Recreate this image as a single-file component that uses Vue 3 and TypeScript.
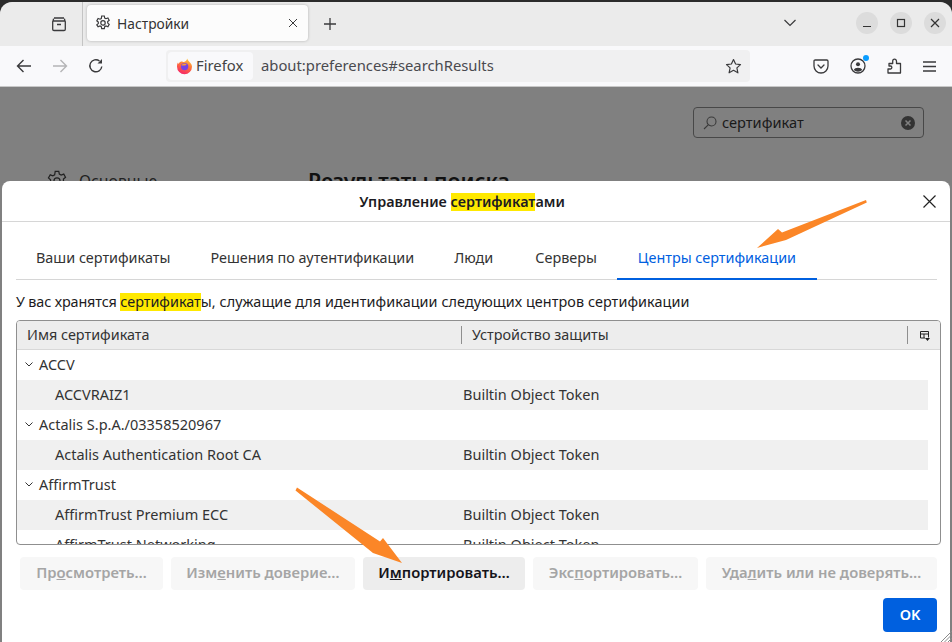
<script setup lang="ts">
interface Row { label: string; token?: string; group: boolean }
const rows: Row[] = [
  { label: 'ACCV', group: true },
  { label: 'ACCVRAIZ1', token: 'Builtin Object Token', group: false },
  { label: 'Actalis S.p.A./03358520967', group: true },
  { label: 'Actalis Authentication Root CA', token: 'Builtin Object Token', group: false },
  { label: 'AffirmTrust', group: true },
  { label: 'AffirmTrust Premium ECC', token: 'Builtin Object Token', group: false },
  { label: 'AffirmTrust Networking', token: 'Builtin Object Token', group: false },
]
const tabs = ['Ваши сертификаты', 'Решения по аутентификации', 'Люди', 'Серверы', 'Центры сертификации']
</script>

<template>
  <div class="screen">
    <div class="window">
      <header class="tabbar">
        <div class="tabbar-left">
          <svg class="ico" width="18" height="18" viewBox="0 0 18 18" fill="none" stroke="#3a3a3c" stroke-width="1.3"><path d="M4 3h10M2.700 6h12.600M2.700 6.200v8a1.300 1.300 0 0 0 1.300 1.300h10a1.300 1.300 0 0 0 1.300-1.300v-8M2.900 6.500 3.600 3.600M15.100 6.500l-.7-2.900M7 9.500h4"/></svg>
        </div>
        <div class="tab">
          <svg width="16" height="16" viewBox="0 0 16 16" fill="none" stroke="#3a3a3c" stroke-width="1.200"><path d="M6.700 1h2.600l.4 2 1.300.7 1.900-.7 1.300 2.300-1.500 1.300v1.500l1.500 1.300-1.300 2.300-1.900-.7-1.300.7-.4 2H6.700l-.4-2-1.300-.7-1.900.7L1.800 9.900l1.500-1.300V7.100L1.800 5.800 3.100 3.500l1.900.7 1.300-.7z"/><circle cx="8" cy="7.900" r="2.200"/></svg>
          <span class="tab-title">Настройки</span>
          <svg width="10" height="10" viewBox="0 0 10 10" stroke="#3a3a3c" stroke-width="1"><path d="M1 1l8 8M9 1 1 9"/></svg>
        </div>
        <svg class="plus" width="14" height="14" viewBox="0 0 14 14" stroke="#3a3a3c" stroke-width="1.300"><path d="M7 1v12M1 7h12"/></svg>
        <div class="spacer"></div>
        <svg class="list-all" width="14" height="8" viewBox="0 0 14 8" fill="none" stroke="#3a3a3c" stroke-width="1.200"><path d="M1.500 1 7 6.500 12.500 1"/></svg>
        <div class="winbtns">
          <span class="winbtn"><svg width="10" height="10" viewBox="0 0 10 10" stroke="#333" stroke-width="1.200"><path d="M1 8.500h8"/></svg></span>
          <span class="winbtn"><svg width="10" height="10" viewBox="0 0 10 10" fill="none" stroke="#333" stroke-width="1.200"><rect x="1.500" y="1.500" width="7" height="7"/></svg></span>
          <span class="winbtn"><svg width="10" height="10" viewBox="0 0 10 10" stroke="#333" stroke-width="1.200"><path d="M1 1l8 8M9 1 1 9"/></svg></span>
        </div>
      </header>

      <nav class="toolbar">
        <svg class="nav" width="16" height="16" viewBox="0 0 16 16" fill="none" stroke="#3a3a3c" stroke-width="1.400"><path d="M15 8H1.500M7.500 2l-6 6 6 6"/></svg>
        <svg class="nav" width="16" height="16" viewBox="0 0 16 16" fill="none" stroke="#b4b4b6" stroke-width="1.400"><path d="M1 8h13.500M8.500 2l6 6-6 6"/></svg>
        <svg class="nav" width="16" height="16" viewBox="0 0 16 16" fill="none" stroke="#3a3a3c" stroke-width="1.400"><path d="M13.800 8.500A6 6 0 1 1 11.500 3"/><path d="M14 1v4.500H9.500" fill="#3a3a3c" stroke="none"/></svg>
        <div class="urlbar">
          <div class="identity">
            <svg width="17" height="17" viewBox="0 0 17 17">
              <defs>
                <linearGradient id="ffg" x1="0.700" y1="0" x2="0.300" y2="1"><stop offset="0" stop-color="#ffc83a"/><stop offset="0.450" stop-color="#ff7139"/><stop offset="1" stop-color="#f5236b"/></linearGradient>
              </defs>
              <path d="M11.200.6c.3 1.700 1.500 2.400 2.500 3.600 1.300 1.300 2.300 2.600 2.300 4.500a7.500 7.500 0 0 1-15 0C1 6.800 1.300 5.600 2 4.600c.1.600.3 1 .8 1.300.3-1.500 1.500-2.300 2.600-2.500 1.200 0 1.400.5 2.600.5C9.600 3.900 10.800 2.400 11.200.6z" fill="url(#ffg)"/>
              <circle cx="8.600" cy="8.600" r="3.700" fill="#7542e5"/>
              <path d="M5.300 7.400h3.600c1 0 1.600-.6 1.600-1.300a3.800 3.800 0 0 0-5.200 1.300z" fill="#ff9a2e"/>
            </svg>
            <span class="id-name">Firefox</span>
          </div>
          <span class="url">about:preferences#searchResults</span>
          <div class="spacer"></div>
          <svg class="star" width="17" height="17" viewBox="0 0 17 17" fill="none" stroke="#3a3a3c" stroke-width="1.200" stroke-linejoin="round"><path d="M8.500 1.500l2.100 4.500 4.900.6-3.600 3.300 1 4.900-4.400-2.500-4.400 2.500 1-4.900-3.600-3.300 4.900-.6z"/></svg>
        </div>
        <div class="actions">
          <svg width="16" height="15" viewBox="0 0 16 15" fill="none" stroke="#3a3a3c" stroke-width="1.300"><path d="M2.200 1h11.600c.6 0 1.200.5 1.200 1.200V7a7 7 0 0 1-14 0V2.200C1 1.500 1.600 1 2.200 1z"/><path d="M5 6l3 3 3-3" stroke-linecap="round"/></svg>
          <span class="account">
            <svg width="16" height="16" viewBox="0 0 16 16" fill="none" stroke="#3a3a3c" stroke-width="1.300"><circle cx="8" cy="8" r="7"/><circle cx="8" cy="6.300" r="2" fill="#3a3a3c" stroke="none"/><path d="M3.800 12c.6-1.600 2-2.300 4.200-2.300s3.600.7 4.200 2.300A6 6 0 0 1 3.800 12z" fill="#3a3a3c" stroke="none"/></svg>
            <i class="dot"></i>
          </span>
          <svg width="15" height="16" viewBox="0 0 15 16" fill="none" stroke="#3a3a3c" stroke-width="1.300" stroke-linejoin="round"><path d="M1 15h12.500V5.500H9.500V3.300C9.500.5 5.700.5 5.700 3.300v2.200H2V8h1.500c1.800 0 1.800 3 0 3H1z"/></svg>
          <svg width="13" height="11" viewBox="0 0 13 11" stroke="#3a3a3c" stroke-width="1.300"><path d="M0 1h13M0 5.500h13M0 10h13"/></svg>
        </div>
      </nav>

      <main class="prefs">
        <div class="search">
          <svg width="14" height="14" viewBox="0 0 14 14" fill="none" stroke="#3a3a3a" stroke-width="1.100"><circle cx="8.500" cy="5.500" r="4.500"/><path d="M5.200 8.800 1 13"/></svg>
          <span class="search-text">сертификат</span>
          <svg width="14" height="14" viewBox="0 0 14 14"><circle cx="7" cy="7" r="7" fill="#333"/><path d="M4.500 4.500l5 5M9.500 4.500l-5 5" stroke="#808080" stroke-width="1.500"/></svg>
        </div>
        <div class="prefs-body">
          <div class="cat">
            <svg width="22" height="22" viewBox="0 0 16 16" fill="none" stroke="#222" stroke-width="0.900"><path d="M6.700 1h2.600l.4 2 1.300.7 1.900-.7 1.300 2.300-1.500 1.300v1.500l1.500 1.300-1.300 2.300-1.900-.7-1.300.7-.4 2H6.700l-.4-2-1.300-.7-1.900.7L1.800 9.900l1.500-1.300V7.100L1.800 5.800 3.100 3.500l1.900.7 1.300-.7z"/><circle cx="8" cy="7.900" r="2.200"/></svg>
            <span class="cat-name">Основные</span>
          </div>
          <h1>Результаты поиска</h1>
        </div>
      </main>
    </div>

    <section class="dialog">
      <div class="dlg-title">
        <span class="dlg-title-text">Управление <mark>сертификат</mark>ами</span>
        <svg class="dlg-close" width="13" height="13" viewBox="0 0 13 13" stroke="#222" stroke-width="1.200"><path d="M.5.500l12 12M12.500.500l-12 12"/></svg>
      </div>
      <div class="dlg-body">
        <div class="tabs">
          <span v-for="(t, i) in tabs" :key="t" class="dtab" :class="{ active: i === tabs.length - 1 }">{{ t }}</span>
        </div>
        <p class="desc"><span class="desc-head">У вас хранятся </span><mark>сертификат</mark><span class="desc-tail">ы, служащие для идентификации следующих центров сертификации</span></p>
        <div class="tree">
          <div class="thead">
            <span class="col1">Имя сертификата</span>
            <span class="col2">Устройство защиты</span>
            <span class="col3">
              <svg width="11" height="11" viewBox="0 0 11 11" fill="none" stroke="#222" stroke-width="1"><path d="M1.500 1.500h8v6M1.500 1.500v6.500H6M1.500 4h8M5 4v4"/><path d="M6 8h5L8.500 11z" fill="#222" stroke="none"/></svg>
            </span>
          </div>
          <div class="tbody">
            <div v-for="r in rows" :key="r.label" class="row" :class="{ leaf: !r.group }">
              <template v-if="r.group">
                <svg class="tw" width="8" height="5" viewBox="0 0 8 5" fill="none" stroke="#333" stroke-width="1"><path d="M.5.500 4 4 7.500.500"/></svg>
                <span>{{ r.label }}</span>
              </template>
              <template v-else>
                <span class="leaf-name">{{ r.label }}</span>
                <span>{{ r.token }}</span>
              </template>
            </div>
          </div>
        </div>
        <div class="btns">
          <button class="btn dis w1">Пр<u>о</u>смотреть…</button>
          <button class="btn dis w2">Изм<u>е</u>нить доверие…</button>
          <button class="btn w3">И<u>м</u>портировать…</button>
          <button class="btn dis w4">Экс<u>п</u>ортировать…</button>
          <button class="btn dis w5">Уда<u>л</u>ить или не доверять…</button>
        </div>
        <div class="ok-row"><button class="ok">OK</button></div>
      </div>
      <svg class="grip" width="11" height="11" viewBox="0 0 11 11" stroke="#8a8a8a" stroke-width="1"><path d="M11 0 0 11M11 3.500 3.500 11M11 7 7 11"/></svg>
    </section>

    <svg class="arrows" width="952" height="642" viewBox="0 0 952 642">
      <path d="M866 200 866.800 202.500 786 240 757 248 778 229 782 232.500z" fill="#fb8627"/>
      <path d="M297 487.500 295.500 490.500 373 553 402 563 383 538 380 541.500z" fill="#fb8627"/>
    </svg>
  </div>
</template>

<style scoped>
.screen {
  position: relative;
  width: 952px;
  height: 642px;
  overflow: hidden;
  background: #2b2b2b;
  font-family: "Noto Sans", "Open Sans", sans-serif;
  font-size: 14.4px;
  color: #1c1b22;
}
.window {
  margin-top: 2px;
  height: 640px;
  display: flex;
  flex-direction: column;
  border-radius: 12px 12px 0 0;
  overflow: hidden;
  background: #808080;
}
.tabbar {
  height: 44px;
  flex: none;
  display: flex;
  align-items: center;
  background: #ebebeb;
}
.tabbar-left {
  width: 83px;
  height: 44px;
  flex: none;
  display: flex;
  align-items: center;
  justify-content: flex-end;
  padding-right: 14px;
  box-sizing: border-box;
  border-right: 1px solid #c4c4c4;
}
.tab {
  margin-left: 4px;
  width: 221px;
  height: 36px;
  box-sizing: border-box;
  padding: 0 10px 0 8px;
  display: flex;
  align-items: center;
  gap: 6px;
  background: #fcfcfc;
  border-radius: 4px;
  box-shadow: 0 0 3px rgba(0, 0, 0, 0.25);
  margin-top: -2px;
  font-size: 13.8px;
}
.tab-title { flex: 1; color: #333; }
.plus { margin-left: 15px; }
.spacer { flex: 1; }
.list-all { margin-right: 59px; margin-top: -2px; }
.winbtns {
  display: flex;
  gap: 12px;
  margin-right: 6px;
  margin-top: -2px;
}
.winbtn {
  width: 22px;
  height: 22px;
  border-radius: 50%;
  background: #dcdcdc;
  display: flex;
  align-items: center;
  justify-content: center;
}
.toolbar {
  height: 40px;
  flex: none;
  display: flex;
  align-items: center;
  background: #f9f9fb;
  border-bottom: 1px solid #c8c8c8;
  padding-left: 16px;
  font-size: 14.8px;
}
.nav { margin-right: 20px; }
.urlbar {
  margin-left: 42px;
  width: 584px;
  height: 32px;
  flex: none;
  display: flex;
  align-items: center;
  background: #f0f0f1;
  border-radius: 4px;
  padding: 0 8px 0 2px;
  box-sizing: border-box;
  color: #444;
}
.identity {
  height: 28px;
  display: flex;
  align-items: center;
  gap: 3px;
  width: 85px;
  box-sizing: border-box;
  padding: 0 0 0 8px;
  background: #f9f9fb;
  border-radius: 4px;
  margin-right: 8px;
  flex: none;
}
.id-name { margin-top: -2px; }
.url { color: #4a4a4f; margin-top: -2px; }
.actions {
  display: flex;
  align-items: center;
  margin-left: 63px;
  gap: 21px;
}
.account { position: relative; display: flex; }
.dot {
  position: absolute;
  top: -3px;
  right: -3px;
  width: 6px;
  height: 6px;
  border-radius: 50%;
  background: #0a9dff;
}
.prefs {
  flex: 1;
  min-height: 0;
  padding: 20px 28px 0 46px;
  overflow: hidden;
}
.search {
  margin-left: auto;
  width: 231px;
  height: 31px;
  box-sizing: border-box;
  border: 1px solid #484848;
  border-radius: 4px;
  display: flex;
  align-items: center;
  padding: 0 8px 0 9px;
  gap: 5px;
  font-size: 14.6px;
}
.search-text { flex: 1; color: #1a1a1a; margin-top: -2px; }
.prefs-body {
  display: flex;
  margin-top: 31px;
  align-items: flex-start;
}
.cat {
  width: 262px;
  display: flex;
  align-items: center;
  gap: 11px;
  font-size: 15.8px;
  color: #222;
}
.cat-name { margin-top: 1px; }
h1 {
  margin: -3px 0 0;
  font-size: 21.3px;
  font-weight: 600;
  color: #111;
}
.dialog {
  position: absolute;
  left: 2px;
  top: 181px;
  width: 948px;
  height: 461px;
  background: #fff;
  border-radius: 8px 8px 0 0;
  display: flex;
  flex-direction: column;
}
.dlg-title {
  height: 40px;
  flex: none;
  border-bottom: 1px solid #d6d6d6;
  display: flex;
  align-items: center;
  justify-content: center;
  position: relative;
  padding-right: 28px;
}
.dlg-title-text { font-weight: 600; }
.dlg-close { position: absolute; right: 14px; top: 14px; }
mark {
  display: inline-block;
  height: 18px;
  line-height: 18px;
  background: #ffe900;
  color: inherit;
}
.desc-head { letter-spacing: -0.14px; }
.desc-tail { letter-spacing: 0.07px; }
.dlg-body {
  flex: 1;
  padding: 0 13px 0 14px;
  display: flex;
  flex-direction: column;
}
.tabs {
  height: 58px;
  flex: none;
  display: flex;
  align-items: center;
  border-bottom: 1px solid #d6d6d6;
  box-sizing: border-box;
}
.dtab {
  height: 100%;
  box-sizing: border-box;
  display: flex;
  align-items: center;
  padding: 14px 20px 0;
  color: #333;
  white-space: nowrap;
}
.dtab:nth-child(3) { padding-right: 22px; }
.dtab.active {
  width: 200px;
  justify-content: center;
  padding-left: 0;
  padding-right: 0;
  color: #0060df;
  border-bottom: 2px solid #0060df;
  margin-bottom: -1px;
  height: calc(100% + 1px);
}
.desc {
  margin: 12px 0 8px;
  line-height: 20px;
  height: 20px;
  white-space: pre;
}
.tree {
  width: 925px;
  height: 225px;
  flex: none;
  box-sizing: border-box;
  border: 1px solid #8f8f8f;
  border-radius: 4px;
  overflow: hidden;
}
.thead {
  height: 28px;
  background: #ededed;
  border-bottom: 1px solid #d8d8d8;
  display: flex;
  align-items: center;
  color: #333;
}
.col1 { width: 434px; padding-left: 10px; border-right: 1px solid #8f8f8f; line-height: 18px; }
.col2 { flex: 1; padding-left: 10px; line-height: 18px; }
.col3 { width: 32px; height: 18px; border-left: 1px solid #8f8f8f; display: flex; align-items: center; justify-content: center; }
.tbody { width: 911px; }
.row {
  height: 30px;
  box-sizing: border-box;
  display: flex;
  align-items: center;
  padding-left: 8px;
  padding-bottom: 2px;
  gap: 6px;
  color: #333;
  white-space: nowrap;
  font-size: 14.5px;
}
.row.leaf { padding-left: 38px; gap: 0; }
.row.leaf:nth-child(2),
.row.leaf:nth-child(4),
.row.leaf:nth-child(6) { background: #f0f0f0; }
.leaf-name { width: 408px; }
.btns {
  margin-top: 12px;
  display: flex;
  gap: 8px;
  padding-left: 4px;
}
.btn {
  height: 33px;
  border: none;
  border-radius: 4px;
  padding: 0 0 3px;
  background: #ededed;
  font-family: inherit;
  font-size: 14.8px;
  font-weight: 600;
  color: #15141a;
}
.btn.dis { background: #f7f7f7; color: #a5a5a5; }
.w1 { width: 143px; }
.w2 { width: 184px; }
.w3 { width: 162px; }
.w4 { width: 165px; }
.w5 { width: 231px; }
.ok-row {
  display: flex;
  justify-content: flex-end;
  margin-top: 8px;
}
.ok {
  width: 54px;
  height: 34px;
  border: none;
  border-radius: 4px;
  background: #0060df;
  color: #fff;
  font-family: inherit;
  font-size: 14.4px;
  font-weight: 600;
  padding: 0 0 2px;
}
.grip { position: absolute; right: -2px; bottom: 0; }
.arrows { position: absolute; left: 0; top: 0; pointer-events: none; }
</style>
